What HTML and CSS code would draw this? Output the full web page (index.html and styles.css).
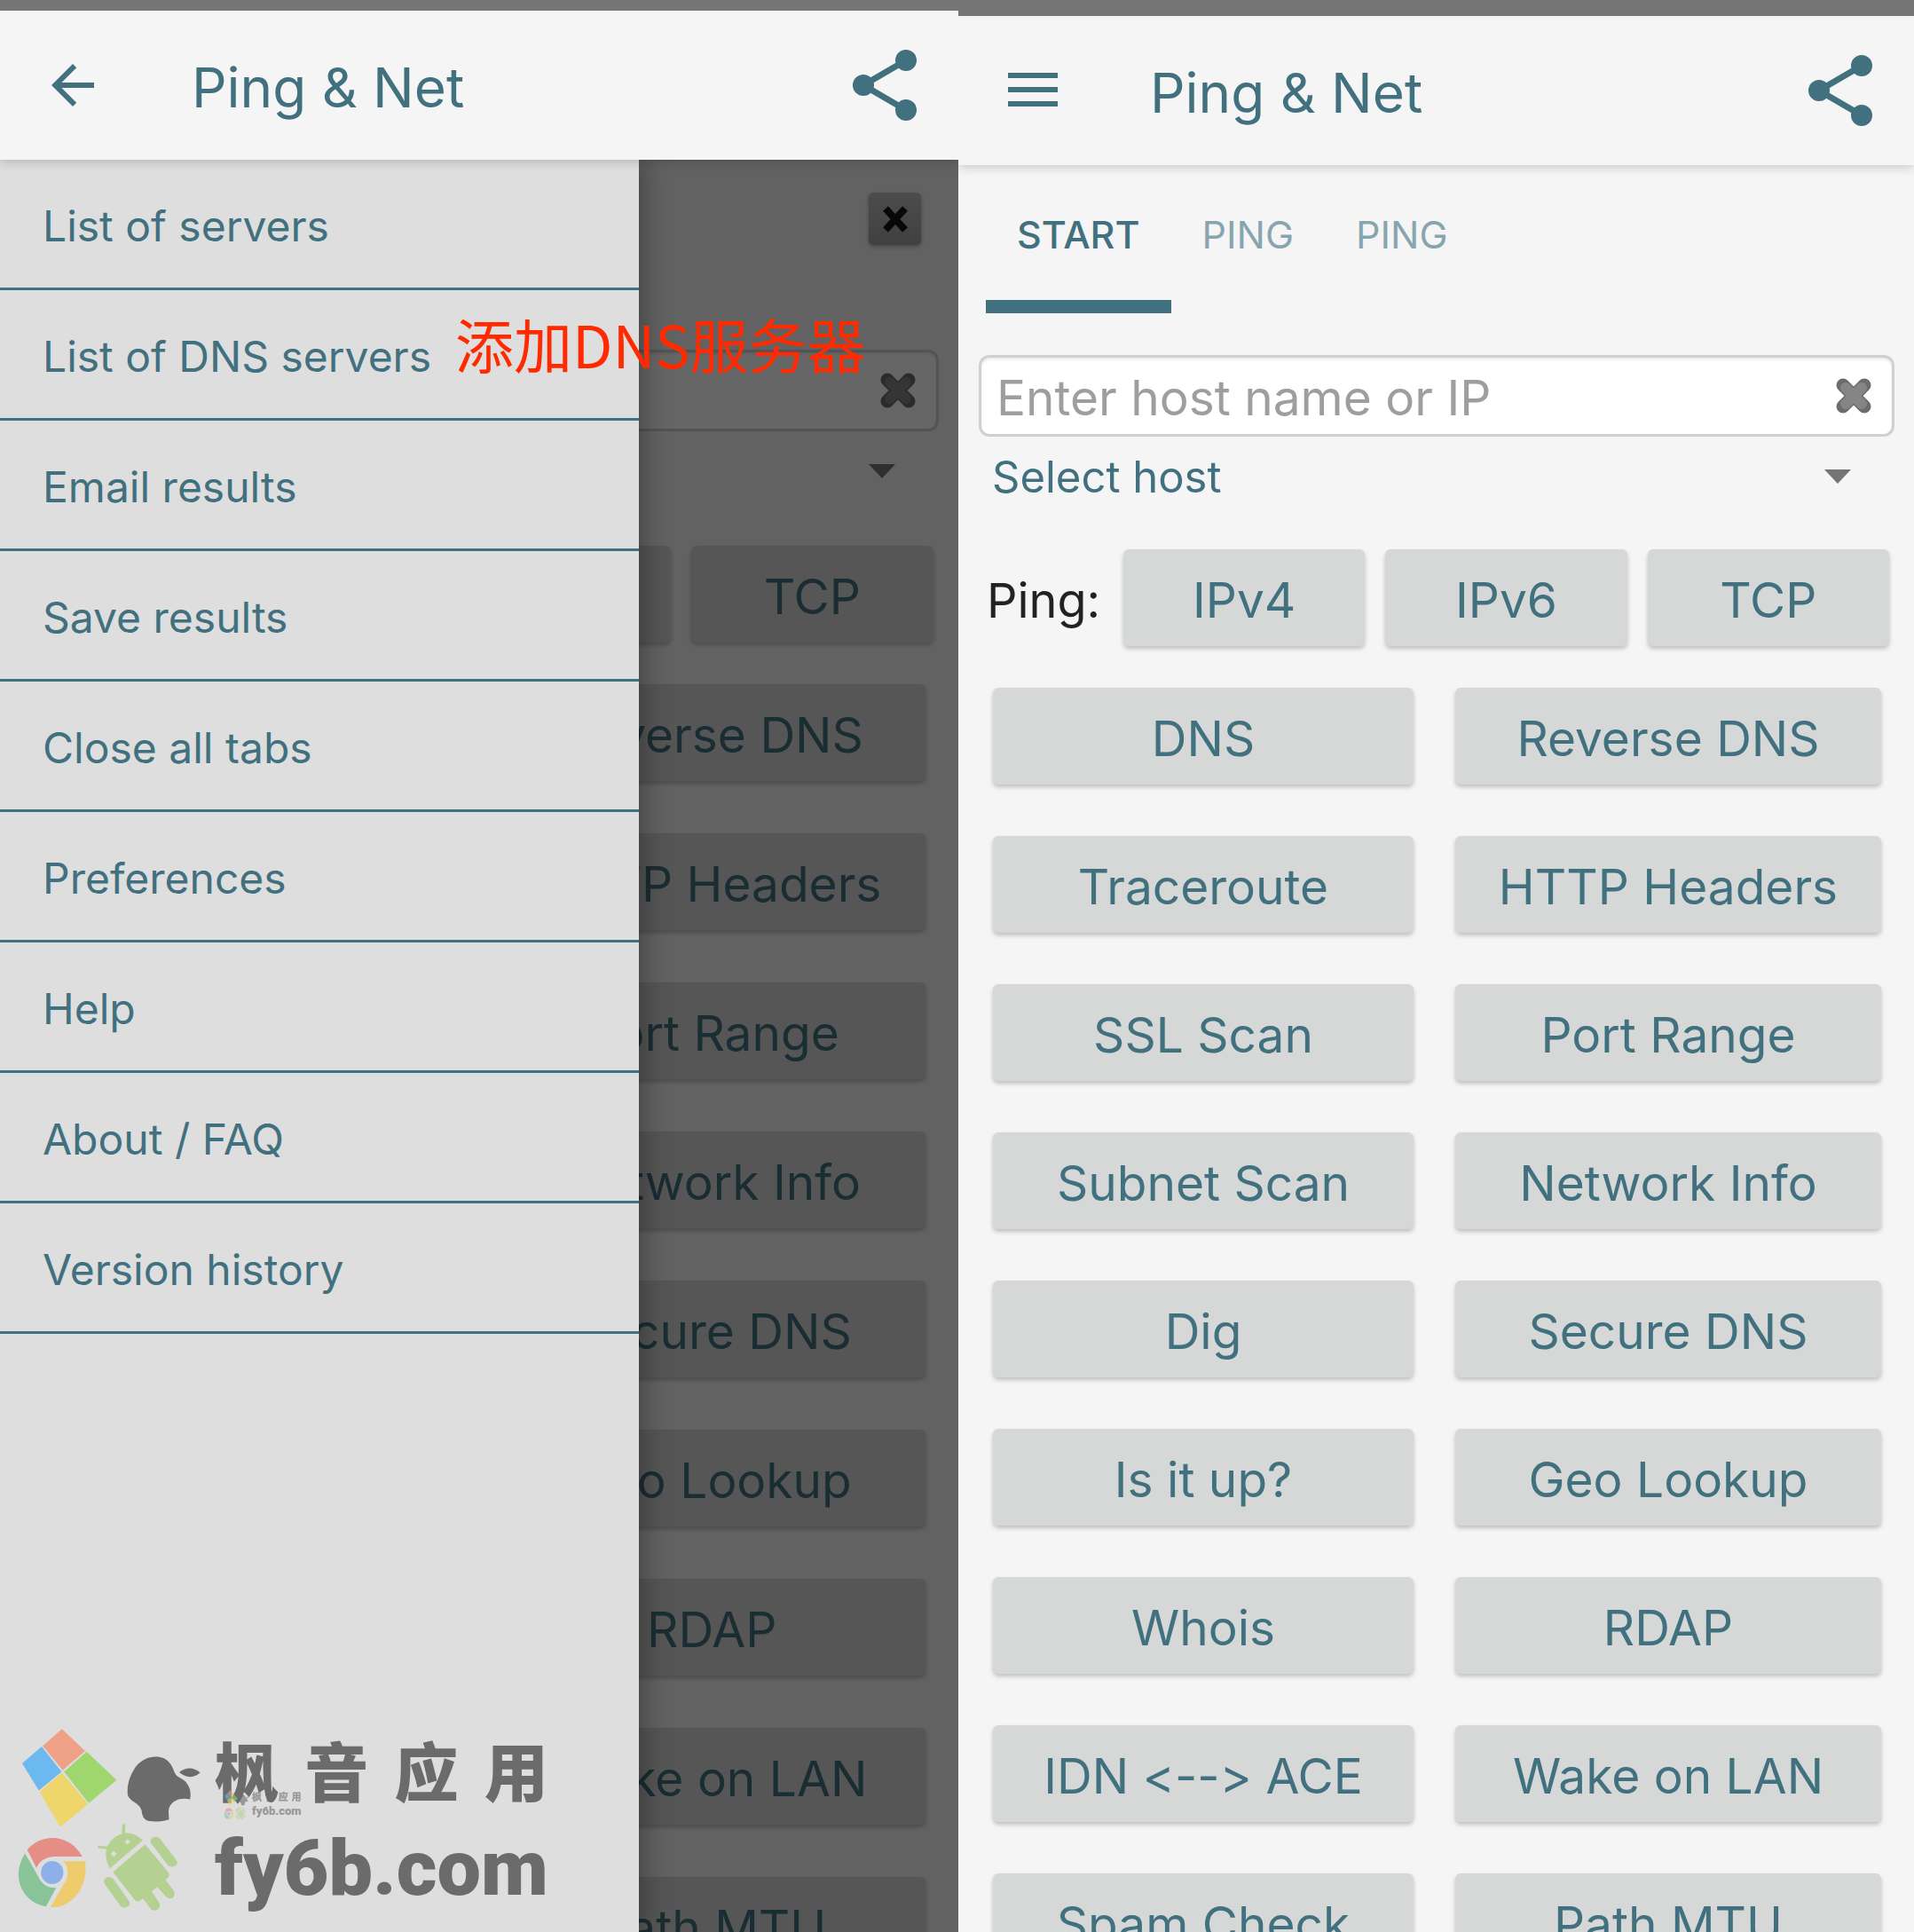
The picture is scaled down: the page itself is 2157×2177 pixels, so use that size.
FILE: index.html
```html
<!DOCTYPE html>
<html lang="en">
<head>
    <meta charset="UTF-8">
    <title>Ping &amp; Net</title>
    <link rel="stylesheet" href="styles.css">
</head>
<body>
<svg class="defs">
    <symbol id="share" viewBox="0 0 72 80">
        <path d="M60 12L12 40L60 68" fill="none" stroke="currentColor" stroke-width="7"/>
        <circle cx="12" cy="40" r="12" fill="currentColor"/>
        <circle cx="60" cy="12" r="12" fill="currentColor"/>
        <circle cx="60" cy="68" r="12" fill="currentColor"/>
    </symbol>
    <symbol id="cross" viewBox="0 0 42 42">
        <path d="M9 9L33 33M33 9L9 33" stroke="#6c6c6c" stroke-width="15" stroke-linecap="round"/>
        <path d="M12 12L30 30M30 12L12 30" stroke="#858585" stroke-width="12" stroke-linecap="round"/>
    </symbol>
    <symbol id="logo" viewBox="40 80 520 620" preserveAspectRatio="none">
        <path d="M172 84L236 158L174 223L119 141Z" fill="#eea187"/>
        <path d="M116 143L171 228L108 291L62 200Z" fill="#6bb9ee"/>
        <path d="M240 160L323 256L246 334L178 228Z" fill="#a0d66e"/>
        <path d="M172 231L244 337L168 415L110 296Z" fill="#eed66c"/>
        <path d="M431 177C465 177 476 205 484 232C490 248 503 248 514 262C525 278 530 295 526 321C500 314 478 325 470 345C464 360 468 375 468 389C450 396 430 398 410 394C396 388 394 375 392 358C384 330 362 332 354 308C350 270 362 235 378 208C392 188 410 177 431 177Z" fill="#6b6b6b"/>
        <path d="M496 230Q525 202 554 231Q525 260 496 230Z" fill="#6b6b6b"/>
        <path d="M76 492C110 438 190 430 228 514L150 514C125 516 108 530 102 553Z" fill="#e58e86"/>
        <path d="M70 504L108 585C118 612 138 622 156 620L128 683C60 668 30 580 70 504Z" fill="#88c498"/>
        <path d="M176 530L236 530C246 610 205 688 140 686L177 608C192 585 192 550 176 530Z" fill="#eecb6c"/>
        <ellipse cx="145" cy="568" rx="31" ry="39" fill="#8eb0e8"/>
        <g fill="#b4d192" stroke="#b4d192" stroke-linecap="round">
            <path d="M305 554C288 520 288 480 315 452C342 425 375 432 395 460Z" stroke="none"/>
            <path d="M402 473L465 566Q471 576 466 584L458 593L480 628Q486 640 480 652Q470 660 460 650L435 617L420 632L440 668Q446 682 438 692Q428 700 418 692L396 656L386 664Q380 668 374 662L313 567Z" stroke="none"/>
            <path d="M431 462L476 534M302 598L345 672" stroke-width="29"/>
            <path d="M343 409L342 440M275 482L300 485" stroke-width="9"/>
        </g>
        <path d="M353 456L361 465L353 474L345 465ZM315 495L323 505L315 515L307 505Z" fill="#dedede"/>
    </symbol>
</svg>

<main class="screens">
    <section class="phone">
        <header class="bar">
            <button class="nav" aria-label="Back">
                <svg width="72" height="72" viewBox="0 0 24 24"><path d="M20 11H7.83l5.59-5.59L12 4l-8 8 8 8 1.41-1.41L7.83 13H20v-2z" fill="currentColor"/></svg>
            </button>
            <h1>Ping &amp; Net</h1>
            <button class="share" aria-label="Share"><svg width="72" height="80"><use href="#share"/></svg></button>
        </header>
        <div class="page">
            <div class="tabs">
                <button class="tab select">START</button>
                <button class="tab">PING</button>
                <button class="tab">PING</button>
                <button class="close" aria-label="Close tab">
                    <svg width="30" height="30" viewBox="0 0 30 30"><path d="M4 3L26 27M26 3L4 27" stroke="#161616" stroke-width="8"/></svg>
                </button>
            </div>
            <div class="host">
                <input type="text" placeholder="Enter host name or IP" aria-label="Host">
                <button class="clear" aria-label="Clear"><svg width="42" height="42"><use href="#cross"/></svg></button>
            </div>
            <div class="pick">
                <select aria-label="Select host"><option>Select host</option></select>
                <svg width="30" height="16" viewBox="0 0 30 16"><path d="M0 0H30L15 16Z" fill="#757575"/></svg>
            </div>
            <div class="ping">
                <span>Ping:</span>
                <button class="btn">IPv4</button>
                <button class="btn">IPv6</button>
                <button class="btn">TCP</button>
            </div>
            <div class="tools">
                <button class="btn">DNS</button>
                <button class="btn">Reverse DNS</button>
                <button class="btn">Traceroute</button>
                <button class="btn">HTTP Headers</button>
                <button class="btn">SSL Scan</button>
                <button class="btn">Port Range</button>
                <button class="btn">Subnet Scan</button>
                <button class="btn">Network Info</button>
                <button class="btn">Dig</button>
                <button class="btn">Secure DNS</button>
                <button class="btn">Is it up?</button>
                <button class="btn">Geo Lookup</button>
                <button class="btn">Whois</button>
                <button class="btn">RDAP</button>
                <button class="btn">IDN &lt;--&gt; ACE</button>
                <button class="btn">Wake on LAN</button>
                <button class="btn">Spam Check</button>
                <button class="btn">Path MTU</button>
            </div>
        </div>

        <div class="scrim">
            <nav class="drawer">
                <a href="#">List of servers</a>
                <a href="#">List of DNS servers</a>
                <a href="#">Email results</a>
                <a href="#">Save results</a>
                <a href="#">Close all tabs</a>
                <a href="#">Preferences</a>
                <a href="#">Help</a>
                <a href="#">About / FAQ</a>
                <a href="#">Version history</a>
                <div class="brand">
                    <svg width="212" height="207"><use href="#logo"/></svg>
                    <div class="words">
                        <div class="cn"><span>枫</span><span>音</span><span>应</span><span>用</span></div>
                        <div class="site">fy6b.com</div>
                    </div>
                    <div class="mini">
                        <svg width="29" height="34"><use href="#logo"/></svg>
                        <div class="words">
                            <div class="cn"><span>枫</span><span>音</span><span>应</span><span>用</span></div>
                            <div class="site">fy6b.com</div>
                        </div>
                    </div>
                </div>
            </nav>
        </div>
        <p class="note">添加DNS服务器</p>
    </section>

    <section class="phone main">
        <header class="bar">
            <button class="nav" aria-label="Menu">
                <svg width="72" height="72" viewBox="0 0 72 72"><path d="M10 16h56v6H10zM10 32h56v6H10zM10 48h56v6H10z" fill="currentColor"/></svg>
            </button>
            <h1>Ping &amp; Net</h1>
            <button class="share" aria-label="Share"><svg width="72" height="80"><use href="#share"/></svg></button>
        </header>
        <div class="page">
            <div class="tabs">
                <button class="tab select">START</button>
                <button class="tab">PING</button>
                <button class="tab">PING</button>
            </div>
            <div class="host">
                <input type="text" placeholder="Enter host name or IP" aria-label="Host">
                <button class="clear" aria-label="Clear"><svg width="42" height="42"><use href="#cross"/></svg></button>
            </div>
            <div class="pick">
                <select aria-label="Select host"><option>Select host</option></select>
                <svg width="30" height="16" viewBox="0 0 30 16"><path d="M0 0H30L15 16Z" fill="#757575"/></svg>
            </div>
            <div class="ping">
                <span>Ping:</span>
                <button class="btn">IPv4</button>
                <button class="btn">IPv6</button>
                <button class="btn">TCP</button>
            </div>
            <div class="tools">
                <button class="btn">DNS</button>
                <button class="btn">Reverse DNS</button>
                <button class="btn">Traceroute</button>
                <button class="btn">HTTP Headers</button>
                <button class="btn">SSL Scan</button>
                <button class="btn">Port Range</button>
                <button class="btn">Subnet Scan</button>
                <button class="btn">Network Info</button>
                <button class="btn">Dig</button>
                <button class="btn">Secure DNS</button>
                <button class="btn">Is it up?</button>
                <button class="btn">Geo Lookup</button>
                <button class="btn">Whois</button>
                <button class="btn">RDAP</button>
                <button class="btn">IDN &lt;--&gt; ACE</button>
                <button class="btn">Wake on LAN</button>
                <button class="btn">Spam Check</button>
                <button class="btn">Path MTU</button>
            </div>
        </div>
    </section>
</main>
</body>
</html>
```
FILE: styles.css
```css
* {
    margin: 0;
    padding: 0;
    box-sizing: border-box;
}
body {
    font-family: Inter, Roboto, "Noto Sans CJK SC", sans-serif;
    color: #41707f;
    background: #f5f5f5;
}
button, input, select {
    font: inherit;
    color: inherit;
    border: 0;
    background: none;
}
svg {
    display: block;
    flex: none;
}
.defs {
    display: none;
}
.screens {
    display: grid;
    grid-template-columns: 1080fr 1077fr;
    height: 100vh;
    overflow: hidden;
}
.phone {
    position: relative;
    display: flex;
    flex-direction: column;
    min-width: 0;
    overflow: hidden;
    border-top: 12px solid #757575;
}
.main {
    border-top-width: 18px;
}

/* app bar */
.bar {
    position: relative;
    z-index: 3;
    display: flex;
    flex: none;
    align-items: center;
    height: 168px;
    padding: 0 47px 0 46px;
    background: #f5f5f5;
    box-shadow: 0 2px 12px rgba(0, 0, 0, 0.2);
}
.bar h1 {
    flex: 1;
    margin-left: 98px;
    padding-top: 5px;
    font-size: 62px;
    font-weight: 400;
}

/* tabs */
.tabs {
    display: flex;
    height: 167px;
    padding: 0 42px 0 31px;
}
.tab {
    padding: 4px 35px 0;
    font-size: 43px;
    border-bottom: 15px solid transparent;
    opacity: 0.6;
}
.tab.select {
    border-color: #41707f;
    font-weight: 500;
    opacity: 1;
}
.close {
    display: grid;
    place-items: center;
    width: 59px;
    height: 59px;
    margin: 37px 0 0 auto;
    border-radius: 5px;
    background: linear-gradient(#bbc0be, #a0a0a0);
    box-shadow: 0 2px 4px rgba(0, 0, 0, 0.3);
}

/* host */
.host {
    display: flex;
    align-items: center;
    height: 92px;
    margin: 47px 22px 0 23px;
    padding: 0 22px 0 17px;
    border: 3px solid #d0d0d0;
    border-radius: 12px;
    background: #fff;
    box-shadow: inset 0 2px 3px #e8e8e8;
}
.host input {
    flex: 1;
    min-width: 0;
    padding-top: 4px;
    font-size: 55px;
}
.host input::placeholder {
    color: #9e9e9e;
    opacity: 1;
}
.pick {
    display: grid;
    align-items: center;
    height: 90px;
}
.pick select {
    grid-area: 1 / 1;
    height: 88px;
    padding-left: 38px;
    font-size: 49px;
    appearance: none;
}
.pick svg {
    grid-area: 1 / 1;
    justify-self: end;
    margin-right: 71px;
    pointer-events: none;
}

/* buttons */
.btn {
    height: 109px;
    padding-top: 5px;
    font-size: 55px;
    font-variant-ligatures: none;
    font-feature-settings: "calt" 0;
    border-radius: 6px;
    background: #d6d8d7;
    box-shadow: 0 3px 5px rgba(0, 0, 0, 0.22);
    white-space: nowrap;
}
.ping {
    display: flex;
    align-items: center;
    gap: 23px;
    margin-top: 39px;
    padding: 0 28px 0 32px;
}
.ping span {
    width: 131px;
    padding-top: 5px;
    font-size: 54px;
    color: #222;
}
.ping .btn {
    flex: 1;
}
.tools {
    display: grid;
    grid-template-columns: 474fr 480fr;
    gap: 59px 47px;
    margin-top: 47px;
    padding: 0 37px 0 39px;
}
.main .ping {
    margin-top: 37px;
}
.main .tools {
    row-gap: 58px;
}

/* drawer */
.scrim {
    position: absolute;
    inset: 168px 0 0;
    z-index: 1;
    background: rgba(0, 0, 0, 0.6);
}
.drawer {
    position: relative;
    display: flex;
    flex-direction: column;
    width: calc(100% * 2 / 3);
    height: 100%;
    background: #dedede;
    box-shadow: 4px 0 30px rgba(0, 0, 0, 0.35);
}
.drawer a {
    height: 147px;
    padding: 4px 48px 0;
    line-height: 142px;
    font-size: 48px;
    color: inherit;
    text-decoration: none;
    border-bottom: 3px solid #41707f;
}
.note {
    position: absolute;
    top: 341px;
    left: 513px;
    z-index: 2;
    font: 66px/66px "Noto Sans CJK SC", sans-serif;
    color: #ff2a00;
    white-space: nowrap;
}

/* brand */
.brand {
    position: relative;
    display: flex;
    gap: 14px;
    margin: auto 112px 6px 16px;
    color: #6b6b6b;
}
.words {
    flex: 1;
}
.cn {
    display: flex;
    justify-content: space-between;
    font: 900 72px/92px "Noto Sans CJK SC", sans-serif;
}
.site {
    font: 900 88px/132px Roboto, sans-serif;
}
.mini {
    position: absolute;
    top: 70px;
    left: 236px;
    display: flex;
    gap: 3px;
    width: 86px;
    opacity: 0.6;
}
.mini .cn {
    font-size: 11px;
    line-height: 14px;
}
.mini .site {
    font-size: 13px;
    line-height: 20px;
}
```
